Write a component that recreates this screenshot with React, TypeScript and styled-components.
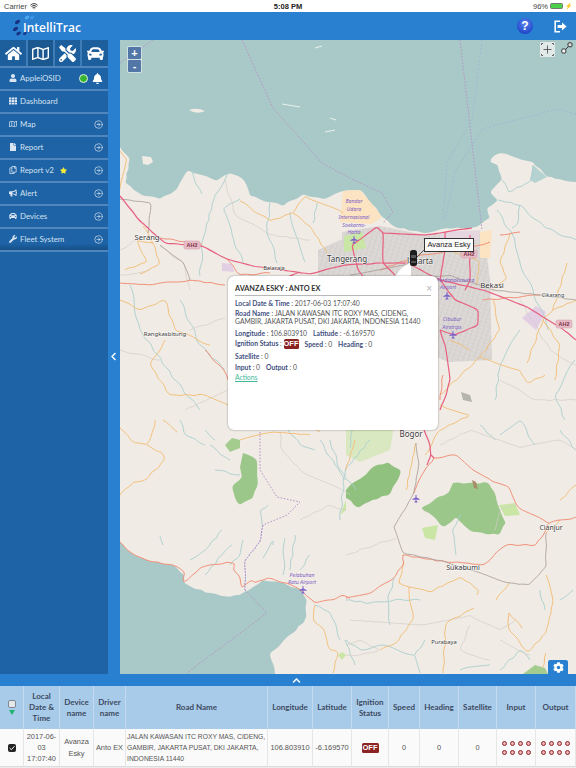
import React from 'react';
import styled, { createGlobalStyle } from 'styled-components';
import { CircleArrowRight, Wifi } from 'lucide-react';
import {
  FaBell,
  FaBullhorn,
  FaCar,
  FaChevronLeft,
  FaChevronUp,
  FaCog,
  FaFile,
  FaHome,
  FaRegCopy,
  FaRegMap,
  FaStar,
  FaTh,
  FaTools,
  FaUser,
  FaWrench,
} from 'react-icons/fa';

// ── Map data (page coordinates, the svg viewBox starts at 120,40) ──────

type RoadKind = 'motorway' | 'primary' | 'secondary' | 'river' | 'minor' | 'trunk';

const roadStyles: Record<RoadKind, { color: string; width: number; wiggle: number }> = {
  river: { color: '#a8cfce', width: 0.9, wiggle: 1.3 },
  minor: { color: '#d2cdc7', width: 0.7, wiggle: 1 },
  secondary: { color: '#f3bb70', width: 0.9, wiggle: 1 },
  primary: { color: '#f09078', width: 1, wiggle: 0.9 },
  motorway: { color: '#e75f7f', width: 1.2, wiggle: 0.3 },
  trunk: { color: '#a39a94', width: 0.8, wiggle: 0.5 },
};

const roads: Record<RoadKind, string[]> = {
  river: [
    'M192 171 L195 182 L202 194',
    'M228 173 L215 195 L203 239 L200 276',
    'M240 199 L223 209 L232 235 L243 263',
    'M270 203 L267 229 L277 263',
    'M317 203 L313 223',
    'M290 212 L298 240 L305 262',
    'M497 210 L515 240 L520 263 L540 307 L548 330',
    'M498 200 L520 205 L545 228 L576 240',
    'M520 205 L517 225 L512 228',
    'M502 180 L508 192 L530 182 L533 165',
    'M163 545 L160 536 M190 560 L210 545 L222 530 M205 575 L222 555 L232 545',
    'M230 565 L240 555 L243 540 M263 558 L273 540 L273 545 M283 575 L285 538 M290 570 L295 535 M300 570 L310 555',
    'M262 525 L260 510 L268 505 M210 445 L230 460 M215 470 L240 475',
    'M180 420 L185 435 L205 445 M205 430 L215 440',
    'M340 520 L345 470 L370 440 M350 448 L352 425',
    'M346 600 L370 603 L394 600 L420 600',
    'M394 578 L388 600 L390 625 M456 555 L452 530 L460 515',
    'M346 640 L360 650 L380 645 L415 655 L420 673',
    'M500 435 L520 420 L535 445 M480 425 L495 440 M540 590 L545 610',
    'M560 600 L573 590 M500 670 L520 650 L530 660 M460 670 L490 665',
    'M356 490 L340 470 L330 440 M560 430 L576 450',
    'M130 285 L140 330 L175 380 L200 410 M180 300 L200 345 L225 370',
    'M355 665 L345 640 M425 640 L415 655',
    'M520 330 L500 365 L495 400 M575 360 L555 395 L565 420',
    'M315 605 L330 612 L340 640 M320 440 L335 465 L345 480',
    'M285 425 L300 445 L315 450 M300 430 L310 420',
  ],
  minor: [
    'M120 250 L137 240 M120 275 L150 270 M160 246 L185 265 L190 290',
    'M280 432 L282 450 L300 470 L350 495 M190 330 L225 318',
    'M350 620 L420 625 L470 615 L500 630 L515 620',
    'M346 555 L375 545 L396 538 M495 530 L500 510 L516 505',
    'M520 300 L550 350 L576 365 M500 380 L535 400 L576 400',
    'M500 440 L520 448 L560 440 L576 450 M440 445 L470 430 L500 440',
    'M300 520 L330 505 L346 510',
    'M346 645 L360 640 L380 650 L360 655 L346 655',
    'M225 180 L235 215 L270 235 L310 240 M120 350 L160 360 M185 410 L228 390',
    'M500 640 L530 655 M470 625 L460 650 L490 660',
  ],
  secondary: [
    'M120 151 L127 159 L122 179 L120 189',
    'M240 201 L270 221 L293 213 L305 196 L343 213',
    'M293 213 L310 226 L327 253',
    'M143 226 L153 243 L160 264 L140 274',
    'M153 243 L137 240 L147 262 L125 270',
    'M120 428 L135 443 L147 445 L153 430 L155 420',
    'M147 445 L163 453 L165 460 L145 480 L133 482 L120 495',
    'M163 420 L177 432',
    'M315 605 L313 620 L322 627 L330 650 L338 652 L333 673',
    'M399 583 L429 592 L461 577 L479 590 L477 595',
    'M409 587 L413 620 L396 643 L380 650',
    'M474 608 L446 623 L443 673',
    'M509 583 L496 600 M509 613 L509 630 L528 652 L546 633 L553 603 L546 575',
    'M546 653 L543 667 M509 613 L522 628',
    'M480 357 L520 370 L527 383 L545 375 M527 363 L543 320 L553 310 L567 263',
    'M510 233 L500 263 L507 277 L493 290',
    'M440 395 L480 357 L500 330 L493 300',
    'M553 310 L576 300 M543 320 L560 345 L555 380',
    'M120 300 L140 310 L165 300 L175 330 L210 345',
    'M165 340 L150 365 L170 395 L205 395 L228 405',
    'M355 440 L346 470 M416 443 L406 490 M399 583 L404 563',
    'M440 405 L470 415 L440 430 L425 455',
    'M560 500 L576 485 M546 533 L560 520',
    'M240 440 L275 432 L310 435 M300 425 L320 432',
    'M450 250 L480 262 L476 285 M450 340 L470 350',
  ],
  primary: [
    'M120 542 L130 552 L153 562 L173 565 L185 573 L183 582 L188 580 L200 568 L227 562 L235 563 L233 570 L240 577 L242 588 L252 580 L255 583 L267 578 L287 583 L303 592 L315 603 L333 600 L342 595 L350 598',
    'M346 598 L371 593 L394 578 L404 563 L403 555',
    'M403 555 L446 562 L463 563 L483 565 L506 545 L536 545 L546 530 L549 523 L576 517',
    'M434 458 L456 455 L473 470 L493 482 L509 487 L519 508 L546 522 L549 523',
    'M434 458 L425 470 L414 493',
    'M160 238 L202 244',
    'M225 285 L190 280 L150 285 L120 283',
    'M380 270 L420 255 L455 250 L490 242',
    'M227 259 L240 275 L270 273',
    'M483 300 L520 297 L540 295',
    'M205 350 L225 372 L228 380',
    'M440 400 L443 375 M500 235 L520 232',
  ],
  trunk: [
    'M120 199 L151 203 L148 233',
    'M394 527 L403 553 L446 562 L509 583 L529 585 L546 567 L546 533',
    'M394 527 L406 508 L414 493 L419 463 L416 443',
    'M493 290 L540 295 L576 300',
    'M420 278 L450 275 L493 290',
    'M160 245 L183 262 L190 280',
    'M350 275 L420 262',
  ],
  motorway: [
    'M120 196 L140 221 L165 243 L202 246 L227 259 L253 266 L310 274 L345 265 L383 263 L407 263',
    'M483 290 L527 307 L560 327 L576 340',
    'M383 233 L377 227 L362 238 L352 245 L358 270 L370 285',
    'M383 233 L383 263 L395 275 M383 233 L425 235 L445 232 L472 228',
    'M445 232 L445 250 L440 280 L455 300 L478 310 L478 325 L455 335 L440 330',
    'M445 345 L450 380 L445 398 L440 410',
    'M407 263 L440 280 L483 290',
    'M424 430 L430 445 L431 455 L427 465 M431 455 L434 458',
    'M300 272 L280 280 L240 282',
    'M470 235 L470 280 L465 290',
    'M440 330 L445 345',
  ],
};

const boundaries = [
  'M120 63 L153 40',
  'M242 40 L273 108 L322 163 L350 178 L382 193 L393 212 L383 223',
  'M460 40 L472 143 L482 230',
  'M260 432 L260 470 L277 497 L300 502 L287 515 L263 525',
  'M245 590 L267 613 L187 673',
];

const shippingLanes = [
  'M482 40 L472 120 L447 163 L443 220',
  'M576 114 L557 109 L482 129 L455 172 L445 220',
];

const northCoast =
  'M576 182 L560 179 L547 177 L533 162 L503 153 L495 155 L490 162 L498 165 L502 180 L490 192 L498 200 L487 208 L490 218 L473 228 L447 228 L423 233 L395 227 L382 217 L373 205 L360 190 L343 191 L323 199 L303 194 L283 206 L250 196 L243 179 L230 173 L217 181 L193 173 L188 170 L177 189 L160 199 L143 196 L125 183 L130 159 L120 147';

const southCoast =
  'M120 542 L130 552 L153 562 L173 565 L185 575 L183 582 L193 588 L210 593 L230 597 L240 595 L253 587 L263 580 L280 582 L302 590 L307 600 L305 620 L293 633 L270 653 L275 674';

const placeNames = [
  { x: 147, y: 240, size: 7.6, text: 'Serang' },
  { x: 347, y: 262, size: 8, text: 'Tangerang' },
  { x: 420, y: 264, size: 8, text: 'Jakarta' },
  { x: 492, y: 288, size: 7.8, text: 'Bekasi' },
  { x: 553, y: 297, size: 5.4, text: 'Cikarang' },
  { x: 411, y: 437, size: 8, text: 'Bogor' },
  { x: 463, y: 570, size: 7.2, text: 'Sukabumi' },
  { x: 551, y: 530, size: 6.9, text: 'Cianjur' },
  { x: 274, y: 270, size: 5.7, text: 'Balaraja' },
  { x: 165, y: 336, size: 6, text: 'Rangkasbitung' },
  { x: 444, y: 644, size: 5.8, text: 'Purabaya' },
];

const airportNames = [
  { x: 354, y: 203, text: 'Bandar' },
  { x: 354, y: 211, text: 'Udara' },
  { x: 354, y: 219, text: 'Internasional' },
  { x: 354, y: 227, text: 'Soekarno-' },
  { x: 354, y: 234, text: 'Hatta' },
  { x: 448, y: 282, text: 'Halim Perdanakusuma' },
  { x: 448, y: 289, text: 'Airport' },
  { x: 452, y: 321, text: 'Cibubur' },
  { x: 452, y: 329, text: 'Airstrips' },
  { x: 302, y: 577, text: 'Pelabuhan' },
  { x: 302, y: 584, text: 'Ratu Airport' },
];

const planes = [
  [354, 240],
  [447, 296],
  [453, 335],
  [303, 590],
  [416, 499],
];

const shields = [
  [192, 245],
  [469, 254],
  [564, 324],
];

// Turns a coarse polyline into a hand-drawn looking curve, the same way every run.
const organic = (d: string, amp: number): string =>
  d
    .split('M')
    .filter((part) => part.trim())
    .map((part) => {
      const nums = part.match(/-?[\d.]+/g)!.map(Number);
      const pts: [number, number][] = [];
      for (let i = 0; i + 1 < nums.length; i += 2) pts.push([nums[i], nums[i + 1]]);
      const fine: [number, number][] = [pts[0]];
      for (let i = 1; i < pts.length; i++) {
        const [ax, ay] = pts[i - 1];
        const [bx, by] = pts[i];
        const len = Math.hypot(bx - ax, by - ay) || 1;
        const n = Math.max(1, Math.round(len / 5));
        for (let j = 1; j <= n; j++) {
          const t = j / n;
          const x = ax + (bx - ax) * t;
          const y = ay + (by - ay) * t;
          const off = j === n ? 0 : amp * Math.sin(x * 1.7 + y * 2.3);
          fine.push([x - ((by - ay) / len) * off, y + ((bx - ax) / len) * off]);
        }
      }
      let out = `M${fine[0][0].toFixed(1)} ${fine[0][1].toFixed(1)}`;
      for (let i = 1; i < fine.length - 1; i++) {
        const mx = (fine[i][0] + fine[i + 1][0]) / 2;
        const my = (fine[i][1] + fine[i + 1][1]) / 2;
        out += ` Q${fine[i][0].toFixed(1)} ${fine[i][1].toFixed(1)} ${mx.toFixed(1)} ${my.toFixed(1)}`;
      }
      const last = fine[fine.length - 1];
      return `${out} L${last[0].toFixed(1)} ${last[1].toFixed(1)}`;
    })
    .join(' ');

const northSea = `M120 40 L576 40 ${organic(northCoast, 1).replace('M', 'L')} Z`;
const southSea = `${organic(southCoast, 1)} L120 674 Z`;

// ── Table data ─────────────────────────────────────────────

const columns = [
  { title: 'check', width: 24 },
  { title: 'Local Date & Time', width: 36 },
  { title: 'Device name', width: 34 },
  { title: 'Driver name', width: 32 },
  { title: 'Road Name', width: 142 },
  { title: 'Longitude', width: 45 },
  { title: 'Latitude', width: 39 },
  { title: 'Ignition Status', width: 37 },
  { title: 'Speed', width: 31 },
  { title: 'Heading', width: 39 },
  { title: 'Satellite', width: 38 },
  { title: 'Input', width: 39 },
  { title: 'Output', width: 40 },
];

const menu = [
  { label: 'Dashboard', icon: <FaTh /> },
  { label: 'Map', icon: <FaRegMap />, arrow: true },
  { label: 'Report', icon: <FaFile />, arrow: true },
  { label: 'Report v2', icon: <FaRegCopy />, arrow: true, star: true },
  { label: 'Alert', icon: <FaBullhorn />, arrow: true },
  { label: 'Devices', icon: <FaCar />, arrow: true },
  { label: 'Fleet System', icon: <FaWrench />, arrow: true },
];

// ── Styled ────────────────────────────────────────────────

const GlobalStyle = createGlobalStyle`
  html, body {
    margin: 0;
    padding: 0;
    background: #ebebeb;
  }
  * {
    box-sizing: border-box;
  }
`;

const Page = styled.div`
  width: 576px;
  height: 768px;
  display: flex;
  flex-direction: column;
  overflow: hidden;
  font-family: Lato, 'Liberation Sans', sans-serif;
`;

const StatusBar = styled.div`
  height: 12px;
  background: #fff;
  display: grid;
  grid-template-columns: 1fr auto 1fr;
  align-items: center;
  padding: 0 4px;
  font-family: 'Liberation Sans', sans-serif;
  font-size: 7.5px;
  color: #444;
`;

const StatusLeft = styled.div`
  display: flex;
  align-items: center;
  gap: 3px;
`;

const StatusTime = styled.div`
  font-weight: 700;
  font-size: 7.5px;
  color: #222;
`;

const StatusRight = styled.div`
  display: flex;
  align-items: center;
  justify-content: flex-end;
  gap: 2px;
`;

const Battery = styled.span`
  width: 13px;
  height: 6px;
  background: #4cd14c;
  border: 1px solid #777;
  border-radius: 1.5px;
`;

const Bolt = styled.span`
  font-size: 6px;
  line-height: 1;
`;

const Header = styled.header`
  height: 28px;
  background: #2a80d0;
  display: flex;
  align-items: center;
  padding: 0 9px 0 12px;
`;

const LogoMark = styled.svg`
  width: 24px;
  height: 24px;
  flex: none;
`;

const LogoText = styled.div`
  margin-left: -13px;
  margin-top: 3px;
  font-family: 'Open Sans', sans-serif;
  font-size: 12px;
  font-weight: 600;
  color: #fff;
`;

const HeaderActions = styled.div`
  margin-left: auto;
  display: flex;
  align-items: center;
  gap: 21px;
`;

const HelpButton = styled.div`
  width: 16px;
  height: 16px;
  border-radius: 50%;
  background: radial-gradient(circle at 50% 35%, #5b86ee, #1f47c9 75%);
  color: #fff;
  font-family: 'Liberation Sans', sans-serif;
  font-weight: 700;
  font-size: 12px;
  line-height: 16px;
  text-align: center;
`;

const Main = styled.div`
  height: 634px;
  display: flex;
`;

const Sidebar = styled.aside`
  width: 108px;
  background: #1d63a6;
  flex: none;
`;

const TabStrip = styled.div`
  height: 26px;
  display: grid;
  grid-template-columns: 26px 25px 25px 26px;
  column-gap: 2px;
  background: #3f7db8;
`;

const Tab = styled.div<{ $active?: boolean }>`
  background: ${({ $active }) => ($active ? '#1b5890' : '#1d5f9d')};
  color: #fff;
  display: flex;
  align-items: center;
  justify-content: center;
  font-size: 17px;
`;

const MenuRow = styled.div<{ $last?: boolean }>`
  height: 23px;
  padding: 0 5px 1px 8px;
  display: flex;
  align-items: center;
  gap: 3px;
  border-top: 2px solid #4f86bd;
  background: ${({ $last }) =>
    $last ? 'linear-gradient(#1d63a6 70%, #174f85)' : '#1d63a6'};
  color: #d3e1ef;
  font-size: 7.9px;
  ${({ $last }) => ($last ? 'height: 25px; border-bottom: 2px solid #4f86bd;' : '')}
`;

const MenuIcon = styled.span`
  width: 9px;
  display: flex;
  justify-content: center;
  font-size: 8px;
  color: #dbe6f2;
`;

const MenuArrow = styled.span`
  margin-left: auto;
  display: flex;
  color: #dbe6f2;
`;

const Online = styled.span`
  margin-left: auto;
  width: 9px;
  height: 9px;
  border-radius: 50%;
  background: #36b52e;
  border: 1px solid #e6f0e6;
`;

const BellWrap = styled.span`
  display: flex;
  color: #fff;
  font-size: 11px;
  margin-left: 1px;
`;

const StarWrap = styled.span`
  display: flex;
  color: #f4ec3a;
  font-size: 7px;
  margin-left: 3px;
`;

const Gutter = styled.div`
  width: 12px;
  flex: none;
  background: #2a80d0;
  display: flex;
  align-items: center;
  justify-content: center;
  color: #fff;
  font-size: 9px;
  padding-bottom: 1px;
`;

const GutterChevron = styled.span`
  display: flex;
  margin-left: -1px;
`;

const MapPane = styled.div`
  position: relative;
  flex: 1;
  overflow: hidden;
`;

const MapSvg = styled.svg`
  display: block;
  width: 456px;
  height: 634px;
`;

const Road = styled.path<{ $kind: RoadKind }>`
  fill: none;
  stroke: ${({ $kind }) => roadStyles[$kind].color};
  stroke-width: ${({ $kind }) => roadStyles[$kind].width};
  stroke-linejoin: round;
`;

const Boundary = styled.path`
  fill: none;
  stroke: #b596c6;
  stroke-width: 1;
  stroke-dasharray: 1.6 1.6;
`;

const ShipLane = styled.path`
  fill: none;
  stroke: #93b3d6;
  stroke-width: 0.7;
  stroke-dasharray: 2 2;
`;

const PlaceName = styled.text<{ $size: number }>`
  font-family: 'Noto Sans', sans-serif;
  font-size: ${({ $size }) => $size}px;
  fill: #3a3a3a;
  text-anchor: middle;
  paint-order: stroke;
  stroke: rgba(255, 255, 255, 0.7);
  stroke-width: 1.2px;
`;

const AirportName = styled.text`
  font-family: 'Noto Sans', sans-serif;
  font-style: italic;
  font-size: 5.2px;
  fill: #7d5fc4;
  text-anchor: middle;
`;

const ShieldText = styled.text`
  font-family: 'Liberation Sans', sans-serif;
  font-size: 5.5px;
  font-weight: 700;
  fill: #7f3346;
  text-anchor: middle;
`;

const ZoomControl = styled.div`
  position: absolute;
  left: 7px;
  top: 6px;
  width: 15px;
  padding: 1px;
  border-radius: 2px;
  background: rgba(255, 255, 255, 0.45);
  display: flex;
  flex-direction: column;
  gap: 1px;
`;

const ZoomButton = styled.div`
  height: 12px;
  background: #5276a8;
  border-radius: 1px;
  color: #fff;
  font-family: 'Liberation Sans', sans-serif;
  font-weight: 700;
  font-size: 11px;
  line-height: 12px;
  text-align: center;
`;

const ExtentControl = styled.div`
  position: absolute;
  right: 21px;
  top: 2px;
  width: 15px;
  height: 15px;
  background: rgba(235, 240, 238, 0.85);
  border-radius: 1px;
  display: flex;
`;

const ExpandControl = styled.div`
  position: absolute;
  right: 3px;
  top: 2px;
  width: 12px;
  height: 12px;
  display: flex;
`;

const CarLabel = styled.div`
  position: absolute;
  left: 304px;
  top: 198px;
  width: 50px;
  height: 14px;
  background: #fbfbfb;
  border: 1.5px solid #333;
  font-family: 'Liberation Sans', sans-serif;
  font-size: 7.5px;
  line-height: 11px;
  text-align: center;
  color: #222;
  white-space: nowrap;
`;

const Popup = styled.div`
  position: absolute;
  left: 108px;
  top: 236px;
  width: 210px;
  height: 154px;
  background: #fff;
  border-radius: 6px;
  box-shadow: 0 0 2px rgba(0, 0, 0, 0.45);
  padding: 7px 7px 0 7px;
  font-size: 6.75px;
  color: #555;
`;

const PopupTitle = styled.div`
  font-size: 7.3px;
  font-weight: 700;
  color: #333;
  line-height: 11px;
  height: 13px;
  border-bottom: 1px solid #b8b8b8;
  margin-bottom: 1.5px;
`;

const PopupClose = styled.span`
  position: absolute;
  right: 6px;
  top: 8px;
  font-family: 'Liberation Sans', sans-serif;
  font-size: 10px;
  line-height: 10px;
  color: #b5b5b5;
`;

const PopupLine = styled.div`
  white-space: nowrap;
  display: flex;
  align-items: center;
  height: 11.4px;
  gap: 6px;
`;

const RoadLine = styled.div`
  line-height: 8px;
  margin: 0 0 2.5px;
  white-space: nowrap;
`;

const Field = styled.span``;

const FieldLabel = styled.b`
  font-weight: 700;
  color: #3f4f80;
`;

const OffBadge = styled.span<{ $size: 'sm' | 'md' }>`
  display: inline-block;
  background: #8b2323;
  color: #fff;
  border-radius: 1.5px;
  font-family: 'Liberation Sans', sans-serif;
  font-weight: 700;
  font-size: 7.5px;
  line-height: 10px;
  text-align: center;
  width: ${({ $size }) => ($size === 'sm' ? '15px' : '17px')};
`;

const ActionsLink = styled.a`
  display: block;
  color: #3fb89a;
  text-decoration: underline;
  line-height: 8px;
`;

const GearTab = styled.div`
  position: absolute;
  right: 8px;
  bottom: 0;
  width: 20px;
  height: 14px;
  background: #2a80d0;
  border-radius: 2px 2px 0 0;
  color: #fff;
  font-size: 11px;
  display: flex;
  align-items: center;
  justify-content: center;
`;

const DrawerBar = styled.div`
  height: 12px;
  background: #2a80d0;
  color: #fff;
  font-size: 9px;
  display: flex;
  align-items: center;
  justify-content: center;
  padding-left: 17px;
`;

const Grid = styled.table`
  width: 576px;
  table-layout: fixed;
  border-collapse: separate;
  border-spacing: 0;
  background: #fff;
`;

const HeadCell = styled.th`
  height: 43px;
  padding: 0 1px;
  background: #a9cbea;
  border-right: 1.5px solid #c4d9ee;
  font-size: 8px;
  font-weight: 700;
  line-height: 11px;
  color: #3c4a60;
  text-align: center;
`;

const BodyCell = styled.td<{ $left?: boolean }>`
  height: 38px;
  padding: 0 1px;
  background: #fafafa;
  border-right: 1.5px solid #e6e6e6;
  border-bottom: 1px solid #dcdcdc;
  font-family: 'Liberation Sans', sans-serif;
  font-size: 7.4px;
  line-height: 11.3px;
  color: #555;
  text-align: ${({ $left }) => ($left ? 'left' : 'center')};
`;

const RoadText = styled.span`
  display: block;
  font-size: 6.75px;
  white-space: nowrap;
`;

const HeadCheck = styled.div`
  width: 8px;
  height: 8px;
  margin: 0 auto 2px;
  border-radius: 2px;
  border: 1px solid #7e8894;
  background: #e6e9ec;
`;

const SortArrow = styled.div`
  width: 0;
  height: 0;
  margin: 0 auto;
  border-left: 3px solid transparent;
  border-right: 3px solid transparent;
  border-top: 5px solid #1fb36b;
`;

const RowCheck = styled.div`
  width: 8px;
  height: 8px;
  margin: 0 auto;
  border-radius: 2px;
  background: #222;
  display: flex;
`;

const DotGrid = styled.div`
  display: grid;
  grid-template-columns: repeat(4, 5px);
  gap: 4px 3px;
  justify-content: center;
`;

const Dot = styled.span`
  width: 5px;
  height: 5px;
  border-radius: 50%;
  background: #e6b4b4;
  border: 1.6px solid #96262c;
`;

// ── Parts ─────────────────────────────────────────────────

const MapDrawing: React.FC = () => (
  <MapSvg viewBox="120 40 456 634">
    <defs>
      <pattern id="streets" width="5" height="4" patternUnits="userSpaceOnUse" patternTransform="rotate(18)">
        <path d="M0 0 H5 M1.5 0 V4" stroke="#c8c3c0" strokeWidth="0.4" fill="none" />
      </pattern>
    </defs>
    <rect x="120" y="40" width="456" height="634" fill="#f0ebe5" />
    {/* sea */}
    <path fill="#a9c9c8" d={northSea} />
    <path fill="#a9c9c8" d={southSea} />
    <path fill="#f0ebe5" d="M189 110 Q197 107 205 111 Q197 115 189 110 Z" />
    <path fill="#f0ebe5" d="M142 156 L151 157 L153 162 L148 165 L143 164 Z" />
    <path fill="none" stroke="#e9f1ee" strokeWidth="1" d="M282 104 L300 107 M330 118 L336 120 M325 132 L335 130 M315 48 L322 46" />
    <path fill="#b5d2d0" d="M533 165 L547 177 L535 183 L530 180 Z" />

    {/* land use */}
    <path fill="#fce3c2" d="M343 191 L360 190 L373 205 L382 217 L372 224 L340 222 Z" />
    <path fill="#dcd8d6" d="M342 232 L380 226 L425 235 L484 232 L490 280 L492 360 L448 362 L410 345 L340 350 Z" />
    <path fill="url(#streets)" d="M342 232 L380 226 L425 235 L484 232 L490 280 L492 360 L448 362 L410 345 L340 350 Z" />
    <path fill="#dcd8d6" d="M318 250 L345 238 L345 278 L318 278 Z" />
    <path fill="url(#streets)" d="M318 250 L345 238 L345 278 L318 278 Z" />
    <path fill="#e6d6e0" d="M440 232 L480 230 L478 240 L440 240 Z" />
    <path fill="#fce3c2" d="M480 232 L492 230 L490 258 L480 258 Z" />
    <path fill="#c9e6a4" d="M344 236 L362 232 L366 248 L344 252 Z" />
    <path fill="#e3cfe4" d="M522 318 L536 306 L546 312 L536 330 Z" />
    <path fill="#e3cfe4" d="M222 263 L232 264 L234 272 L222 271 Z" />
    <path fill="#b5b5ad" d="M461 392 L470 395 L472 402 L463 400 Z" />
    <path fill="#c9e6a4" d="M346 420 L395 420 L390 450 L360 462 L346 455 Z" opacity="0.55" />
    <path fill="#a4cc8f" d="M225 445 L232 438 L240 440 L240 448 L230 452 Z" />
    <path fill="#9cc78a" d={`${organic('M243 453 L257 460 L258 482 L253 498 L240 505 L235 498 L232 487 L242 477 L240 467', 0.8)} Z`} />
    <path fill="#91c17f" d={`${organic('M346 490 L373 467 L388 462 L401 470 L391 493 L369 502 L359 508 L346 498', 1.2)} Z`} />
    <path fill="#9cc78a" d={`${organic('M453 483 L489 483 L496 497 L506 523 L499 535 L473 532 L456 517 L443 527 L429 513 L421 508 L434 500 L449 492', 1)} Z`} />
    <path fill="#c9e6a4" d="M499 505 L515 503 L520 515 L505 516 Z" />
    <path fill="#c9e6a4" d="M422 528 L438 525 L435 540 L425 538 Z" />
    <path fill="#a4cc8f" d="M523 674 L535 665 L545 668 L548 674 Z" />
    <path fill="#c9e6a4" d="M338 655 L342 652 L346 655 L342 660 Z" />
    <path fill="#c9e6a4" d="M340 515 L346 500 L346 510 Z" />
    <path fill="#a88d6a" d="M472 480 L476 482 L478 489 L474 488 Z" />

    {(Object.keys(roads) as RoadKind[]).map((kind) =>
      roads[kind].map((d) => <Road key={kind + d} $kind={kind} d={organic(d, roadStyles[kind].wiggle)} />)
    )}
    {boundaries.map((d) => (
      <Boundary key={d} d={d} />
    ))}
    <path
      fill="none"
      stroke="#9480c8"
      strokeWidth="1"
      strokeDasharray="2 1"
      d={organic('M263 525 L260 542 L245 560 L245 590', 0.6)}
    />
    {shippingLanes.map((d) => (
      <ShipLane key={d} d={d} />
    ))}

    {shields.map(([x, y]) => (
      <g key={x}>
        <rect x={x - 8} y={y - 4} width="16" height="8" rx="1.5" fill="#e6bcc6" stroke="#d79aaa" strokeWidth="0.5" />
        <ShieldText x={x} y={y + 2}>
          AH2
        </ShieldText>
      </g>
    ))}
    {planes.map(([x, y]) => (
      <path
        key={x}
        fill="#7a5fc8"
        d={`M${x - 0.5} ${y - 4} h1 v2.6 l3 1.4 v1 l-3 -0.6 v1.6 l1 0.8 v0.6 h-3 v-0.6 l1 -0.8 v-1.6 l-3 0.6 v-1 l3 -1.4 z`}
      />
    ))}
    {placeNames.map((p) => (
      <PlaceName key={p.text} x={p.x} y={p.y} $size={p.size}>
        {p.text}
      </PlaceName>
    ))}
    {airportNames.map((a) => (
      <AirportName key={a.text} x={a.x} y={a.y}>
        {a.text}
      </AirportName>
    ))}

    {/* popup tail and car marker */}
    <path fill="#fff" d="M395 278 C398 270 404 266 411 262 L411 278 Z" />
    <path stroke="#333" strokeWidth="0.8" fill="none" d="M417 257 L424 250" />
    <rect x="410" y="250" width="7" height="16" rx="2.5" fill="#1c1c1c" />
    <rect x="411" y="255" width="5" height="3" rx="0.5" fill="#555" />
    <rect x="411" y="261" width="5" height="2" rx="0.5" fill="#555" />
  </MapSvg>
);

const App: React.FC = () => (
  <Page>
    <GlobalStyle />
    <StatusBar>
      <StatusLeft>
        Carrier <Wifi size={8} strokeWidth={3} />
      </StatusLeft>
      <StatusTime>5:08 PM</StatusTime>
      <StatusRight>
        96% <Battery /> <Bolt>⚡</Bolt>
      </StatusRight>
    </StatusBar>

    <Header>
      <LogoMark viewBox="0 0 24 24">
        <ellipse cx="15" cy="3.5" rx="2.4" ry="1.6" fill="#4aa8f0" transform="rotate(-30 15 3.5)" />
        <ellipse cx="20" cy="3.5" rx="2.4" ry="1.6" fill="#3c94e6" transform="rotate(-30 20 3.5)" />
        <ellipse cx="5.5" cy="8" rx="2.8" ry="1.7" fill="#16317f" transform="rotate(-30 5.5 8)" />
        <ellipse cx="3.5" cy="15" rx="2.8" ry="1.7" fill="#16317f" transform="rotate(-30 3.5 15)" />
        <ellipse cx="6.5" cy="19.5" rx="2.4" ry="1.5" fill="#16317f" transform="rotate(-30 6.5 19.5)" />
        <ellipse cx="13" cy="19.5" rx="2.2" ry="1.3" fill="#1b3f95" transform="rotate(-30 13 19.5)" />
        <ellipse cx="17.5" cy="17" rx="2" ry="1.2" fill="#1b3f95" transform="rotate(-30 17.5 17)" />
      </LogoMark>
      <LogoText>IntelliTrac</LogoText>
      <HeaderActions>
        <HelpButton>?</HelpButton>
        <svg width="13" height="13" viewBox="0 0 13 13">
          <path d="M6 1.2 H1.2 V11.8 H6" fill="none" stroke="#fff" strokeWidth="1.6" />
          <path d="M3.6 5 H8 V2.4 L12.6 6.5 L8 10.6 V8 H3.6 Z" fill="#fff" />
        </svg>
      </HeaderActions>
    </Header>

    <Main>
      <Sidebar>
        <TabStrip>
          <Tab>
            <FaHome />
          </Tab>
          <Tab $active>
            <FaRegMap />
          </Tab>
          <Tab>
            <FaTools />
          </Tab>
          <Tab>
            <FaCar />
          </Tab>
        </TabStrip>
        <MenuRow>
          <MenuIcon>
            <FaUser />
          </MenuIcon>
          AppleiOSID
          <Online />
          <BellWrap>
            <FaBell />
          </BellWrap>
        </MenuRow>
        {menu.map((item, i) => (
          <MenuRow key={item.label} $last={i === menu.length - 1}>
            <MenuIcon>{item.icon}</MenuIcon>
            {item.label}
            {item.star && (
              <StarWrap>
                <FaStar />
              </StarWrap>
            )}
            {item.arrow && (
              <MenuArrow>
                <CircleArrowRight size={9} strokeWidth={1.8} />
              </MenuArrow>
            )}
          </MenuRow>
        ))}
      </Sidebar>

      <Gutter>
        <GutterChevron>
          <FaChevronLeft />
        </GutterChevron>
      </Gutter>

      <MapPane>
        <MapDrawing />
        <ZoomControl>
          <ZoomButton>+</ZoomButton>
          <ZoomButton>-</ZoomButton>
        </ZoomControl>
        <ExtentControl>
          <svg width="15" height="15" viewBox="0 0 15 15">
            <path d="M7.5 3.5 V11.5 M3.5 7.5 H11.5" stroke="#444" strokeWidth="0.8" />
            <path
              d="M1.5 3 V1.5 H3 M12 1.5 H13.5 V3 M13.5 12 V13.5 H12 M3 13.5 H1.5 V12"
              fill="none"
              stroke="#555"
              strokeWidth="0.9"
            />
          </svg>
        </ExtentControl>
        <ExpandControl>
          <svg width="12" height="12" viewBox="0 0 12 12">
            <rect x="0.8" y="7" width="4" height="4" rx="1" fill="#fff" stroke="#333" strokeWidth="1" />
            <rect x="7" y="0.8" width="4" height="4" rx="1" fill="#ddd" stroke="#333" strokeWidth="1" />
            <path d="M4.5 7.5 L7.5 4.5" stroke="#333" strokeWidth="1" />
          </svg>
        </ExpandControl>
        <CarLabel>Avanza Esky</CarLabel>

        <Popup>
          <PopupTitle>AVANZA ESKY : ANTO EX</PopupTitle>
          <PopupClose>×</PopupClose>
          <PopupLine>
            <Field>
              <FieldLabel>Local Date &amp; Time</FieldLabel> : 2017-06-03 17:07:40
            </Field>
          </PopupLine>
          <RoadLine>
            <FieldLabel>Road Name</FieldLabel> : JALAN KAWASAN ITC ROXY MAS, CIDENG,
            <br />
            GAMBIR, JAKARTA PUSAT, DKI JAKARTA, INDONESIA 11440
          </RoadLine>
          <PopupLine>
            <Field>
              <FieldLabel>Longitude</FieldLabel> : 106.803910
            </Field>
            <Field>
              <FieldLabel>Latitude</FieldLabel> : -6.169570
            </Field>
          </PopupLine>
          <PopupLine>
            <Field>
              <FieldLabel>Ignition Status</FieldLabel> : <OffBadge $size="sm">OFF</OffBadge>
            </Field>
            <Field>
              <FieldLabel>Speed</FieldLabel> : 0
            </Field>
            <Field>
              <FieldLabel>Heading</FieldLabel> : 0
            </Field>
          </PopupLine>
          <PopupLine>
            <Field>
              <FieldLabel>Satellite</FieldLabel> : 0
            </Field>
          </PopupLine>
          <PopupLine>
            <Field>
              <FieldLabel>Input</FieldLabel> : 0
            </Field>
            <Field>
              <FieldLabel>Output</FieldLabel> : 0
            </Field>
          </PopupLine>
          <ActionsLink>Actions</ActionsLink>
        </Popup>

        <GearTab>
          <FaCog />
        </GearTab>
      </MapPane>
    </Main>

    <DrawerBar>
      <FaChevronUp />
    </DrawerBar>

    <Grid>
      <colgroup>
        {columns.map((c) => (
          <col key={c.title} width={c.width} />
        ))}
      </colgroup>
      <thead>
        <tr>
          <HeadCell>
            <HeadCheck />
            <SortArrow />
          </HeadCell>
          {columns.slice(1).map((c) => (
            <HeadCell key={c.title}>{c.title}</HeadCell>
          ))}
        </tr>
      </thead>
      <tbody>
        <tr>
          <BodyCell>
            <RowCheck>
              <svg width="8" height="8" viewBox="0 0 8 8">
                <path d="M1.6 4 L3.3 5.7 L6.5 2.2" fill="none" stroke="#fff" strokeWidth="1" />
              </svg>
            </RowCheck>
          </BodyCell>
          <BodyCell>2017-06-03 17:07:40</BodyCell>
          <BodyCell>Avanza Esky</BodyCell>
          <BodyCell>Anto EX</BodyCell>
          <BodyCell $left>
            <RoadText>JALAN KAWASAN ITC ROXY MAS, CIDENG,</RoadText>
            <RoadText>GAMBIR, JAKARTA PUSAT, DKI JAKARTA,</RoadText>
            <RoadText>INDONESIA 11440</RoadText>
          </BodyCell>
          <BodyCell>106.803910</BodyCell>
          <BodyCell>-6.169570</BodyCell>
          <BodyCell>
            <OffBadge $size="md">OFF</OffBadge>
          </BodyCell>
          <BodyCell>0</BodyCell>
          <BodyCell>0</BodyCell>
          <BodyCell>0</BodyCell>
          <BodyCell>
            <DotGrid>
              {Array.from({ length: 8 }, (_, i) => (
                <Dot key={i} />
              ))}
            </DotGrid>
          </BodyCell>
          <BodyCell>
            <DotGrid>
              {Array.from({ length: 8 }, (_, i) => (
                <Dot key={i} />
              ))}
            </DotGrid>
          </BodyCell>
        </tr>
      </tbody>
    </Grid>
  </Page>
);

export default App;
